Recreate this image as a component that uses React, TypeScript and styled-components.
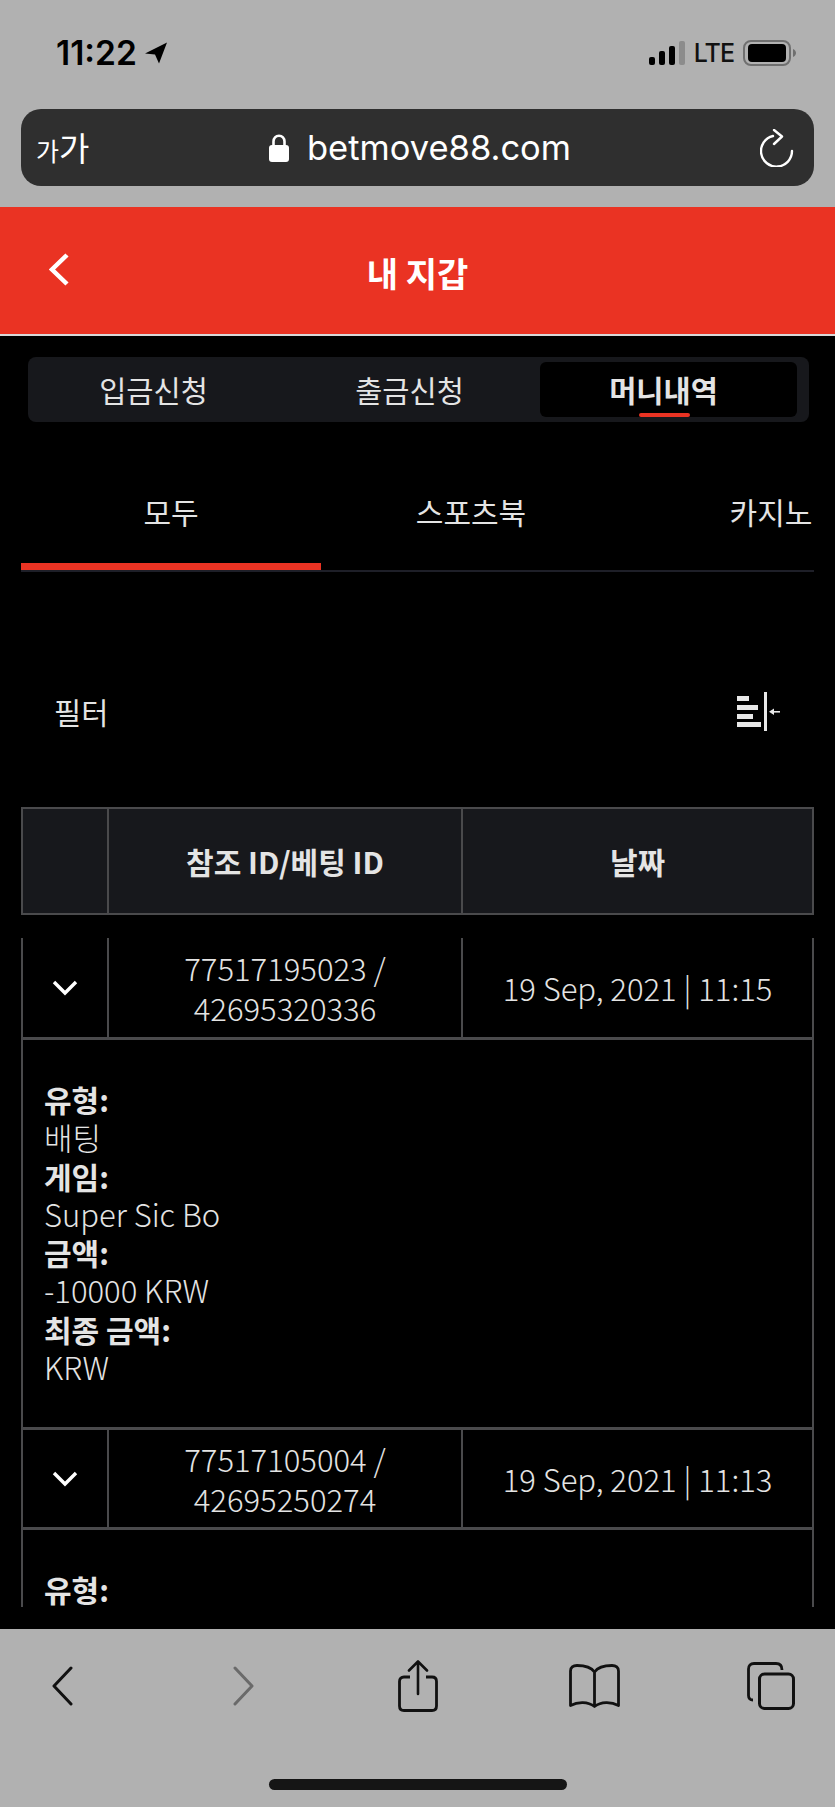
import React from "react";
import styled, { createGlobalStyle } from "styled-components";

const GlobalStyle = createGlobalStyle`
  html, body {
    margin: 0;
    padding: 0;
    background: #000;
  }
  * {
    box-sizing: border-box;
  }
`;

const FONT = `"Noto Sans CJK KR", "Noto Sans", sans-serif`;
const LINE = "#4a4a4c";

type Detail = { label: string; value?: string };

type Transaction = {
  ids: string[];
  date: string;
  details: Detail[];
};

const transactions: Transaction[] = [
  {
    ids: ["77517195023 /", "42695320336"],
    date: "19 Sep, 2021 | 11:15",
    details: [
      { label: "유형:", value: "배팅" },
      { label: "게임:", value: "Super Sic Bo" },
      { label: "금액:", value: "-10000 KRW" },
      { label: "최종 금액:", value: "KRW" },
    ],
  },
  {
    ids: ["77517105004 /", "42695250274"],
    date: "19 Sep, 2021 | 11:13",
    details: [{ label: "유형:" }],
  },
];

const App: React.FC = () => {
  return (
    <Page>
      <GlobalStyle />
      <BrowserTop>
        <StatusBar>
          <Clock>
            <span>11:22</span>
            <svg width="24" height="22" viewBox="0 0 24 22">
              <path d="M23 0.5 L1 11.5 L11 12.5 L15 21.5 Z" fill="#000" />
            </svg>
          </Clock>
          <StatusIcons>
            <svg width="36" height="24" viewBox="0 0 36 24">
              <rect x="0" y="16" width="6" height="8" rx="2" fill="#000" />
              <rect x="10" y="10" width="6" height="14" rx="2" fill="#000" />
              <rect x="20" y="5" width="6" height="19" rx="2" fill="#000" />
              <rect x="30" y="0" width="6" height="24" rx="2" fill="#8c8c8c" />
            </svg>
            <Lte>LTE</Lte>
            <svg width="53" height="26" viewBox="0 0 53 26">
              <rect x="1" y="1" width="46" height="24" rx="7" fill="none" stroke="#6f6f6f" strokeWidth="2" />
              <rect x="5" y="4" width="38" height="18" rx="4" fill="#000" />
              <path d="M50 9 C52 10 53 11.5 53 13 C53 14.5 52 16 50 17 Z" fill="#6f6f6f" />
            </svg>
          </StatusIcons>
        </StatusBar>
        <AddressBar>
          <TextSize>
            <small>가</small>가
          </TextSize>
          <UrlBox>
            <svg width="20" height="28" viewBox="0 0 20 28">
              <path d="M4.5 13 V7.5 C4.5 4 6.8 1.8 10 1.8 C13.2 1.8 15.5 4 15.5 7.5 V13" fill="none" stroke="#fff" strokeWidth="2.6" />
              <rect x="0" y="11" width="20" height="17" rx="3" fill="#fff" />
            </svg>
            <span>betmove88.com</span>
          </UrlBox>
          <ReloadIcon width="34" height="38" viewBox="0 0 34 38">
            <path d="M13 7 A15.5 15.5 0 1 0 32 22" fill="none" stroke="#fff" strokeWidth="2.4" strokeLinecap="round" />
            <path d="M14 1 L22 7.5 L14 15" fill="none" stroke="#fff" strokeWidth="2.4" strokeLinecap="round" strokeLinejoin="round" />
          </ReloadIcon>
        </AddressBar>
      </BrowserTop>

      <Header>
        <BackButton>
          <svg width="20" height="33" viewBox="0 0 20 33">
            <path d="M18 2 L3 16.5 L18 31" fill="none" stroke="#fff" strokeWidth="4.5" />
          </svg>
        </BackButton>
        <Title>내 지갑</Title>
      </Header>

      <Main>
        <MainTabs>
          <MainTab>입금신청</MainTab>
          <MainTab>출금신청</MainTab>
          <MainTab $active>머니내역</MainTab>
        </MainTabs>

        <SubTabs>
          <SubTab $active>모두</SubTab>
          <SubTab>스포츠북</SubTab>
          <SubTab>카지노</SubTab>
        </SubTabs>

        <FilterRow>
          <FilterLabel>필터</FilterLabel>
          <svg width="43" height="39" viewBox="0 0 43 39">
            <g fill="#e8e8e8">
              <rect x="0" y="4" width="12" height="5" />
              <rect x="0" y="13" width="21" height="5" />
              <rect x="0" y="22" width="16" height="5" />
              <rect x="0" y="30" width="24" height="5" />
              <rect x="27" y="0" width="3" height="39" />
              <rect x="35" y="19" width="8" height="1.6" />
              <path d="M32 19.8 L37 16.5 V23 Z" />
            </g>
          </svg>
        </FilterRow>

        <HeadRow>
          <HeadCell />
          <HeadCell>참조 ID/베팅 ID</HeadCell>
          <HeadCell>날짜</HeadCell>
        </HeadRow>

        <List>
          {transactions.map((item) => (
            <Entry key={item.ids[0]}>
              <Row>
                <ToggleCell>
                  <svg width="26" height="16" viewBox="0 0 26 16">
                    <path d="M2 2 L13 13 L24 2" fill="none" stroke="#fff" strokeWidth="3.4" />
                  </svg>
                </ToggleCell>
                <Cell>
                  {item.ids[0]}
                  <br />
                  {item.ids[1]}
                </Cell>
                <Cell>{item.date}</Cell>
              </Row>
              <DetailPanel>
                {item.details.map((detail) => (
                  <React.Fragment key={detail.label}>
                    <DetailLabel>{detail.label}</DetailLabel>
                    {detail.value && <DetailValue>{detail.value}</DetailValue>}
                  </React.Fragment>
                ))}
              </DetailPanel>
            </Entry>
          ))}
        </List>
      </Main>

      <Toolbar>
        <ToolIcons>
          <svg width="22" height="40" viewBox="0 0 22 40">
            <path d="M20 2 L3 20 L20 38" fill="none" stroke="#111" strokeWidth="3" strokeLinecap="round" strokeLinejoin="round" />
          </svg>
          <svg width="22" height="40" viewBox="0 0 22 40">
            <path d="M2 2 L19 20 L2 38" fill="none" stroke="#6a6a6a" strokeWidth="3" strokeLinecap="round" strokeLinejoin="round" />
          </svg>
          <svg width="40" height="52" viewBox="0 0 40 52">
            <path d="M12 17 H6 C3 17 1.5 18.5 1.5 21.5 V46 C1.5 49 3 50.5 6 50.5 H34 C37 50.5 38.5 49 38.5 46 V21.5 C38.5 18.5 37 17 34 17 H28" fill="none" stroke="#111" strokeWidth="2.8" />
            <path d="M20 34 V2 M11 10.5 L20 1.5 L29 10.5" fill="none" stroke="#111" strokeWidth="2.6" strokeLinecap="round" strokeLinejoin="round" />
          </svg>
          <svg width="51" height="44" viewBox="0 0 51 44">
            <path d="M25.5 8 C22 3 16 1.5 8 1.5 C4 1.5 1.5 3.5 1.5 7 V41.5 C9 37.5 19 37.5 25.5 42.5 C32 37.5 42 37.5 49.5 41.5 V7 C49.5 3.5 47 1.5 43 1.5 C35 1.5 29 3 25.5 8 Z M25.5 8 V42.5" fill="none" stroke="#111" strokeWidth="2.8" strokeLinejoin="round" />
          </svg>
          <svg width="48" height="48" viewBox="0 0 48 48">
            <path d="M6 38 C3 38 1.5 36 1.5 33.5 V7 C1.5 3.5 3.5 1.5 7 1.5 H29 C33 1.5 35 3.5 35 8" fill="none" stroke="#111" strokeWidth="2.8" />
            <rect x="12.5" y="12" width="34" height="34.5" rx="5" fill="none" stroke="#111" strokeWidth="3" />
          </svg>
        </ToolIcons>
        <HomeBar />
      </Toolbar>
    </Page>
  );
};

export default App;

const Page = styled.div`
  width: 835px;
  height: 1807px;
  overflow: hidden;
  background: #000;
  font-family: ${FONT};
`;

const BrowserTop = styled.div`
  height: 207px;
  padding: 0 21px;
  background: #b1b1b1;
`;

const StatusBar = styled.div`
  display: flex;
  justify-content: space-between;
  align-items: center;
  height: 109px;
  padding: 0 18px 3px 35px;
`;

const Clock = styled.div`
  display: flex;
  align-items: center;
  gap: 7px;
  color: #000;
  font-family: Inter, sans-serif;
  font-size: 33.5px;
  font-weight: 600;
`;

const StatusIcons = styled.div`
  display: flex;
  align-items: center;
  gap: 9px;
`;

const Lte = styled.span`
  color: #111;
  font-family: Inter, sans-serif;
  font-size: 25px;
  font-weight: 500;
  letter-spacing: -1px;
`;

const AddressBar = styled.div`
  display: grid;
  grid-template-columns: 1fr auto 1fr;
  align-items: center;
  height: 77px;
  padding: 0 20px 0 15px;
  border-radius: 20px;
  background: #2f2f2f;
  color: #fff;
`;

const TextSize = styled.div`
  font-size: 33px;
  line-height: 1;

  small {
    font-size: 25px;
  }
`;

const UrlBox = styled.div`
  display: flex;
  align-items: center;
  gap: 18px;
  padding-left: 10px;
  font-family: Inter, sans-serif;
  font-size: 34.5px;
  font-weight: 400;
`;

const ReloadIcon = styled.svg`
  justify-self: end;
`;

const Header = styled.header`
  display: flex;
  align-items: center;
  justify-content: center;
  position: relative;
  height: 129px;
  padding-top: 4px;
  border-bottom: 2px solid #d9d9d9;
  background: #ea3323;
`;

const BackButton = styled.div`
  position: absolute;
  left: 49px;
  top: 46px;
  display: flex;
`;

const Title = styled.h1`
  margin: 0;
  color: #fff;
  font-size: 34px;
  font-weight: 700;
  line-height: 1;
`;

const Main = styled.main`
  height: 1293px;
  padding: 21px 21px 0;
  background: #000;
`;

const MainTabs = styled.div`
  display: grid;
  grid-template-columns: 251px 261px 257px;
  height: 65px;
  margin: 0 5px 0 7px;
  padding: 5px 12px 5px 0;
  border-radius: 8px;
  background: #17181c;
`;

const MainTab = styled.div<{ $active?: boolean }>`
  display: flex;
  align-items: center;
  justify-content: center;
  position: relative;
  padding-bottom: 2px;
  padding-right: ${(p) => (p.$active ? "10px" : "0")};
  border-radius: 6px;
  background: ${(p) => (p.$active ? "#000" : "transparent")};
  color: #e4e4e4;
  font-size: 29.5px;
  font-weight: ${(p) => (p.$active ? 700 : 400)};

  &::after {
    content: "";
    display: ${(p) => (p.$active ? "block" : "none")};
    position: absolute;
    left: 99px;
    bottom: 0;
    width: 51px;
    height: 4px;
    border-radius: 2px;
    background: #ea3323;
  }
`;

const SubTabs = styled.div`
  display: flex;
  height: 113px;
  margin-top: 37px;
  overflow: hidden;
  border-bottom: 2px solid #1e1f28;
`;

const SubTab = styled.div<{ $active?: boolean }>`
  display: flex;
  flex: 0 0 300px;
  align-items: center;
  justify-content: center;
  height: 111px;
  border-bottom: 7px solid ${(p) => (p.$active ? "#ea3323" : "transparent")};
  color: #e4e4e4;
  font-size: 30px;
`;

const FilterRow = styled.div`
  display: flex;
  justify-content: space-between;
  align-items: center;
  height: 78px;
  margin-top: 100px;
  padding: 0 34px 0 33px;
`;

const FilterLabel = styled.span`
  color: #e4e4e4;
  font-size: 29.5px;
`;

const HeadRow = styled.div`
  display: grid;
  grid-template-columns: 84px 354px 1fr;
  height: 108px;
  margin-top: 57px;
  border: 2px solid ${LINE};
  background: #17181c;
`;

const HeadCell = styled.div`
  display: flex;
  align-items: center;
  justify-content: center;
  color: #e4e4e4;
  font-size: 30px;
  font-weight: 700;

  & + & {
    border-left: 2px solid ${LINE};
  }
`;

const List = styled.div`
  height: 669px;
  margin-top: 23px;
  overflow: hidden;
`;

const Row = styled.div`
  display: grid;
  grid-template-columns: 84px 354px 1fr;
  height: 100px;
  border: 2px solid ${LINE};
  border-top-width: 3px;
  border-bottom: 0;
`;

const Entry = styled.div`
  &:first-child ${Row} {
    height: 99px;
    border-top: 0;
  }
`;

const Cell = styled.div`
  display: flex;
  align-items: center;
  justify-content: center;
  padding-top: 1px;
  color: #e4e4e4;
  font-size: 31px;
  font-weight: 300;
  line-height: 40px;
  text-align: center;
  border-left: 2px solid ${LINE};
`;

const ToggleCell = styled(Cell)`
  padding-top: 0;
  border-left: 0;
`;

const DetailPanel = styled.div`
  height: 390px;
  padding: 40px 0 0 21px;
  border: 2px solid ${LINE};
  border-top-width: 3px;
  border-bottom: 0;
  color: #e4e4e4;
  line-height: 38.3px;
`;

const DetailLabel = styled.div`
  font-size: 30px;
  font-weight: 700;
`;

const DetailValue = styled.div`
  font-size: 31px;
  font-weight: 300;
`;

const Toolbar = styled.div`
  height: 178px;
  padding: 31px 0 0 51px;
  background: #b1b1b1;
`;

const ToolIcons = styled.div`
  display: grid;
  grid-template-columns: 182px 165px 171px 178px auto;
  justify-items: start;
  align-items: center;
  height: 52px;
`;

const HomeBar = styled.div`
  width: 298px;
  height: 11px;
  margin: 67px 0 0 218px;
  border-radius: 6px;
  background: #151515;
`;
